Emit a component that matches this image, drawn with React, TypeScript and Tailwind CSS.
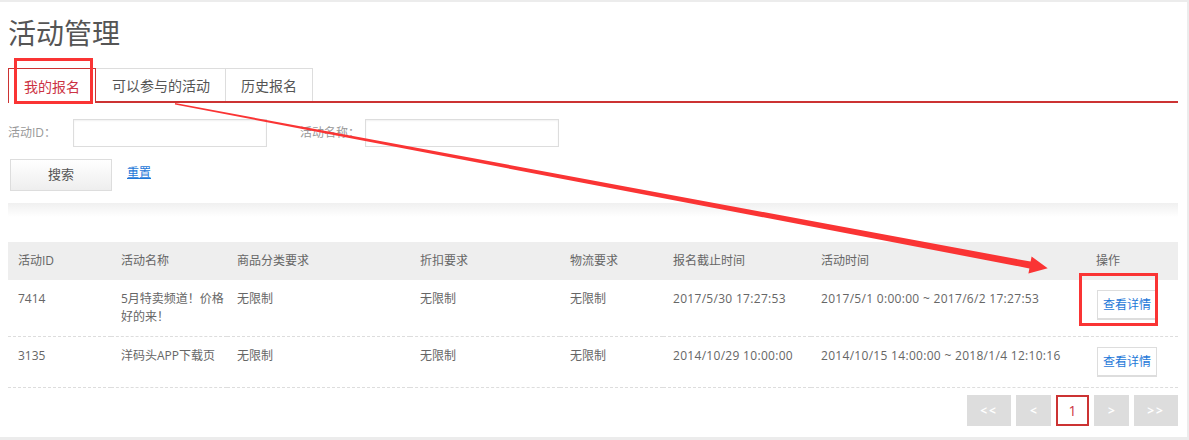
import React from 'react';

const rows = [
  {
    id: '7414',
    name: '5月特卖频道！价格好的来！',
    category: '无限制',
    discount: '无限制',
    logistics: '无限制',
    deadline: '2017/5/30 17:27:53',
    period: '2017/5/1 0:00:00 ~ 2017/6/2 17:27:53',
  },
  {
    id: '3135',
    name: '洋码头APP下载页',
    category: '无限制',
    discount: '无限制',
    logistics: '无限制',
    deadline: '2014/10/29 10:00:00',
    period: '2014/10/15 14:00:00 ~ 2018/1/4 12:10:16',
  },
];

const columns = [
  { title: '活动ID', width: 'w-[103px]' },
  { title: '活动名称', width: 'w-[116px]' },
  { title: '商品分类要求', width: 'w-[183px]' },
  { title: '折扣要求', width: 'w-[150px]' },
  { title: '物流要求', width: 'w-[103px]' },
  { title: '报名截止时间', width: 'w-[148px]' },
  { title: '活动时间', width: 'w-[275px]' },
  { title: '操作', width: 'w-[92px]' },
];

function Tabs() {
  return (
    <div className="mt-[15px] flex h-[35px] items-start border-b-2 border-[#cc3333]">
      <div className="flex h-[35px] items-center border border-b-0 border-[#cc3333] bg-white px-[15px] text-[14px] text-[#cc3344]">
        我的报名
      </div>
      <div className="flex h-[33px] items-center border-t border-r border-[#dddddd] pl-4 pr-[15px] text-[14px] text-[#555555]">
        可以参与的活动
      </div>
      <div className="flex h-[33px] items-center border-t border-r border-[#dddddd] px-[15px] text-[14px] text-[#555555]">
        历史报名
      </div>
    </div>
  );
}

function SearchForm() {
  return (
    <>
      <div className="mt-[16px] flex items-center text-[12px] text-[#999999]">
        <span className="w-[65px]">活动ID：</span>
        <input className="h-[28px] w-[194px] border border-[#dddddd] shadow-[inset_0_1px_2px_rgba(0,0,0,0.06)] outline-none" />
        <span className="ml-[33px] w-[65px]">活动名称：</span>
        <input className="h-[28px] w-[194px] border border-[#dddddd] shadow-[inset_0_1px_2px_rgba(0,0,0,0.06)] outline-none" />
      </div>
      <div className="mt-[12px] flex items-center">
        <button className="ml-[2px] h-[32px] w-[102px] border border-[#dddddd] bg-gradient-to-b from-white to-[#eeeeee] text-[13px] text-[#555555]">
          搜索
        </button>
        <a href="#" className="ml-[15px] -mt-[4px] text-[12px] text-[#1e78d8] underline">
          重置
        </a>
      </div>
      <div className="mt-[12px] h-[14px] bg-gradient-to-b from-[#f0f0f0] to-white" />
    </>
  );
}

function DataTable() {
  return (
    <table className="mt-[25px] w-[1170px] table-fixed border-collapse text-[12px] leading-[18px] text-[#666666]">
      <thead>
        <tr className="h-[38px] bg-[#eeeeee]">
          {columns.map((c) => (
            <th key={c.title} className={`${c.width} pl-[10px] text-left font-normal`}>
              {c.title}
            </th>
          ))}
        </tr>
      </thead>
      <tbody>
        {rows.map((r) => (
          <tr key={r.id} className="border-b border-dashed border-[#dddddd] align-top">
            <td className="py-[10px] pl-[10px]">{r.id}</td>
            <td className="py-[10px] pl-[10px]">{r.name}</td>
            <td className="py-[10px] pl-[10px]">{r.category}</td>
            <td className="py-[10px] pl-[10px]">{r.discount}</td>
            <td className="py-[10px] pl-[10px]">{r.logistics}</td>
            <td className="py-[10px] pl-[10px] tracking-[0.3px]">{r.deadline}</td>
            <td className="py-[10px] pl-[10px] tracking-[0.3px]">{r.period}</td>
            <td className="py-[10px] pl-[11px]">
              <button className="h-[30px] w-[60px] border border-b-2 border-[#dddddd] bg-white text-[12px] text-[#1e78d8]">
                查看详情
              </button>
            </td>
          </tr>
        ))}
      </tbody>
    </table>
  );
}

function Pagination() {
  const gray = 'flex h-[31px] items-center justify-center bg-[#dddddd] text-[12px] font-bold text-white';
  return (
    <div className="mt-[7px] flex w-[1170px] justify-end gap-[5px]">
      <span className={`${gray} w-[44px] tracking-[2px]`}>&lt;&lt;</span>
      <span className={`${gray} w-[35px]`}>&lt;</span>
      <span className="flex h-[31px] w-[33px] items-center justify-center border-2 border-[#cc3333] bg-white text-[14px] text-[#cc3344]">
        1
      </span>
      <span className={`${gray} w-[35px]`}>&gt;</span>
      <span className={`${gray} w-[44px] tracking-[2px]`}>&gt;&gt;</span>
    </div>
  );
}

function Annotations() {
  return (
    <svg className="pointer-events-none absolute left-0 top-0" width="1189" height="440" viewBox="0 0 1189 440">
      <rect x="15.5" y="59.5" width="76" height="43" fill="none" stroke="#fa3434" strokeWidth="3" />
      <rect x="1080.5" y="274.5" width="76" height="50" fill="none" stroke="#fa3434" strokeWidth="3" />
      <polygon
        fill="#fa3434"
        points="175.1,103 1030.6,261.6 1031.6,256.6 1047.7,268.3 1028.4,273.4 1029.4,268.4 174.9,104.5"
      />
    </svg>
  );
}

export default function App() {
  return (
    <div
      className="relative h-[440px] w-[1189px] overflow-hidden bg-[#ececec] pt-[2px] pr-[2px] pb-[3px]"
      style={{ fontFamily: '"Open Sans", "Noto Sans CJK SC", sans-serif' }}
    >
      <div className="h-full bg-white pl-2 pr-[9px]">
        <h1 className="pt-[11px] text-[28px] leading-[40px] text-[#555555]">活动管理</h1>
        <Tabs />
        <SearchForm />
        <DataTable />
        <Pagination />
      </div>
      <Annotations />
    </div>
  );
}
